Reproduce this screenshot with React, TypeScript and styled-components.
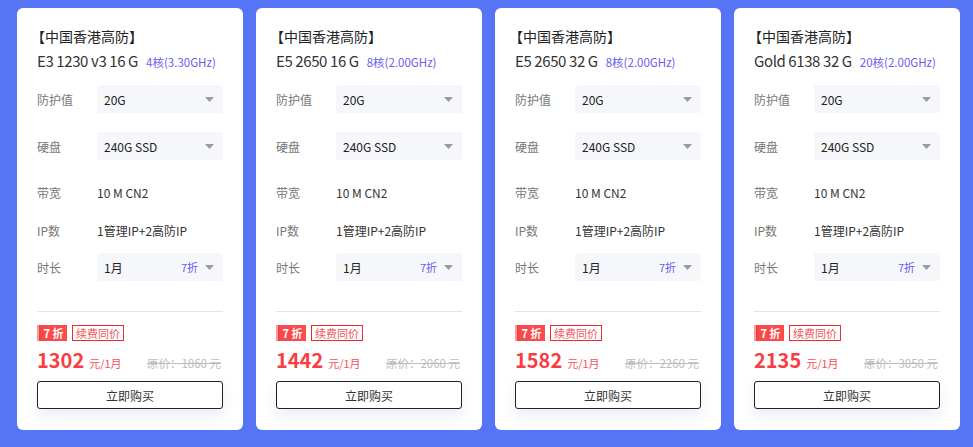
import styled, { createGlobalStyle } from "styled-components";

const GlobalStyle = createGlobalStyle`
  html, body {
    margin: 0;
    padding: 0;
    height: 100%;
    background: #5574f6;
  }
  body {
    font-family: "Noto Sans CJK SC", "Noto Sans", sans-serif;
  }
`;

type Plan = {
  model: string;
  cores: string;
  price: string;
  origin: string;
};

const plans: Plan[] = [
  { model: "E3 1230 v3 16 G", cores: "4核(3.30GHz)", price: "1302", origin: "1860" },
  { model: "E5 2650 16 G", cores: "8核(2.00GHz)", price: "1442", origin: "2060" },
  { model: "E5 2650 32 G", cores: "8核(2.00GHz)", price: "1582", origin: "2260" },
  { model: "Gold 6138 32 G", cores: "20核(2.00GHz)", price: "2135", origin: "3050" },
];

const Caret = () => (
  <svg width="9" height="5" viewBox="0 0 9 5">
    <path d="M0 0h9L4.5 5z" fill="#9a9aa3" />
  </svg>
);

const App = () => {
  return (
    <>
      <GlobalStyle />
      <Page>
        {plans.map((p) => (
          <Card key={p.model}>
            <Title>【中国香港高防】</Title>
            <Model>
              {p.model}
              <Cores>{p.cores}</Cores>
            </Model>

            <Row $top={12}>
              <Label>防护值</Label>
              <Select>
                <span>20G</span>
                <Caret />
              </Select>
            </Row>
            <Row $top={19}>
              <Label>硬盘</Label>
              <Select>
                <span>240G SSD</span>
                <Caret />
              </Select>
            </Row>
            <Row $top={18}>
              <Label>带宽</Label>
              <Value>10 M CN2</Value>
            </Row>
            <Row $top={10}>
              <Label>IP数</Label>
              <Value>1管理IP+2高防IP</Value>
            </Row>
            <Row $top={9}>
              <Label>时长</Label>
              <Select>
                <span>1月</span>
                <SelectEnd>
                  <Discount>7折</Discount>
                  <Caret />
                </SelectEnd>
              </Select>
            </Row>

            <Divider />

            <Tags>
              <OffTag>7 折</OffTag>
              <RenewTag>续费同价</RenewTag>
            </Tags>

            <PriceRow>
              <Price>
                <Amount>{p.price}</Amount>
                <Unit>元/1月</Unit>
              </Price>
              <Origin>原价：{p.origin} 元</Origin>
            </PriceRow>

            <BuyButton>立即购买</BuyButton>
          </Card>
        ))}
      </Page>
    </>
  );
};

export default App;

const Page = styled.div`
  display: flex;
  gap: 13px;
  padding: 8px 13px 0 17px;
`;

const Card = styled.div`
  width: 226px;
  height: 422px;
  box-sizing: border-box;
  background: #ffffff;
  border-radius: 6px;
  padding: 18px 20px 0 20px;
  display: flex;
  flex-direction: column;
`;

const Title = styled.div`
  font-size: 14px;
  line-height: 20px;
  color: #222;
  margin-left: -6px;
`;

const Model = styled.div`
  margin-top: 4px;
  font-size: 15px;
  letter-spacing: -0.4px;
  line-height: 22px;
  color: #333;
  white-space: nowrap;
`;

const Cores = styled.span`
  margin-left: 8px;
  font-size: 11.5px;
  letter-spacing: 0;
  color: #6b5cf0;
`;

const Row = styled.div<{ $top: number }>`
  display: flex;
  align-items: center;
  height: 28px;
  margin-top: ${(p) => p.$top}px;
`;

const Label = styled.div`
  width: 60px;
  flex-shrink: 0;
  font-size: 12px;
  color: #777;
`;

const Select = styled.div`
  flex: 1;
  height: 28px;
  box-sizing: border-box;
  background: #f6f7fb;
  border-radius: 2px;
  padding: 0 9px 0 7px;
  display: flex;
  align-items: center;
  justify-content: space-between;
  font-size: 12px;
  color: #222;
`;

const SelectEnd = styled.div`
  display: flex;
  align-items: center;
  gap: 7px;
`;

const Discount = styled.span`
  font-size: 11px;
  color: #6b5cf0;
`;

const Value = styled.div`
  font-size: 12px;
  color: #333;
`;

const Divider = styled.div`
  margin-top: 30px;
  height: 1px;
  flex-shrink: 0;
  background: #e4e4e6;
`;

const Tags = styled.div`
  margin-top: 13px;
  display: flex;
  align-items: center;
  gap: 5px;
`;

const OffTag = styled.div`
  width: 30px;
  height: 16px;
  box-sizing: border-box;
  padding-left: 3px;
  background: linear-gradient(
    90deg,
    #ff9a9a 0,
    #ff9a9a 2px,
    #e93b3b 2px,
    #f54a4a 4px,
    #ff4a4a 100%
  );
  color: #fff;
  font-size: 11px;
  font-weight: 700;
  line-height: 16px;
  text-align: center;
`;

const RenewTag = styled.div`
  height: 16px;
  box-sizing: border-box;
  border: 1px solid #f52828;
  padding: 0 3px;
  font-size: 11px;
  line-height: 14px;
  color: #f0555a;
`;

const PriceRow = styled.div`
  margin-top: 4px;
  height: 24px;
  display: flex;
  align-items: baseline;
  justify-content: space-between;
  padding-right: 2px;
`;

const Price = styled.div`
  display: flex;
  align-items: baseline;
  gap: 5px;
`;

const Amount = styled.span`
  font-size: 20px;
  font-weight: 700;
  color: #f93d42;
`;

const Unit = styled.span`
  font-size: 11px;
  color: #f5505a;
`;

const Origin = styled.span`
  font-size: 11.5px;
  color: #bcbcbc;
  text-decoration: line-through;
`;

const BuyButton = styled.button`
  margin-top: 12px;
  height: 28px;
  width: 100%;
  flex-shrink: 0;
  background: #fff;
  border: 1px solid #222;
  border-radius: 3px;
  font-family: inherit;
  font-size: 12px;
  color: #333;
  box-shadow: 0 6px 14px rgba(80, 100, 200, 0.12);
  cursor: pointer;
`;
